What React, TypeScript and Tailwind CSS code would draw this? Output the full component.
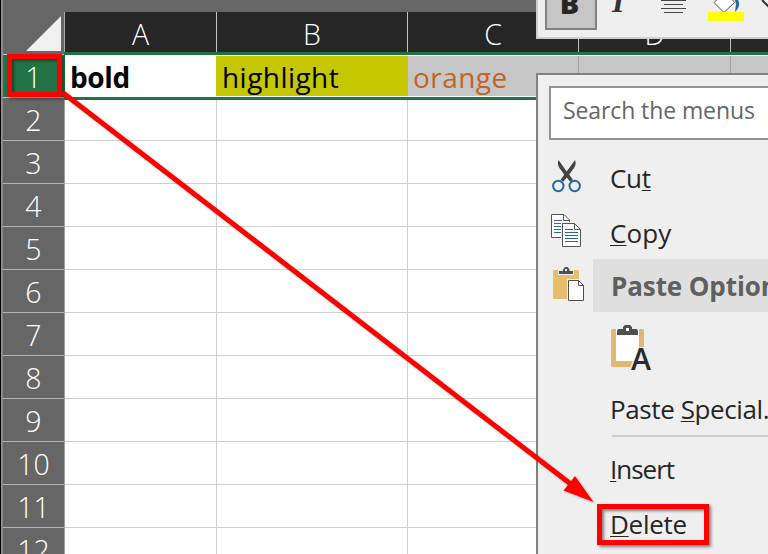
import React from "react";

const rows = [2, 3, 4, 5, 6, 7, 8, 9, 10, 11, 12];
const grid = "grid shrink-0 grid-cols-[152px_191px_171px_152px_60px]";
const u = "underline decoration-1 underline-offset-[2px] [text-decoration-skip-ink:none]";

function Sheet() {
  return (
    <div className="flex h-full w-full flex-col">
      <div className="h-3 shrink-0 bg-[#666666]" />
      <div className="flex h-10 shrink-0">
        <div className="flex w-[61px] shrink-0 justify-end bg-[#666666] pr-[3px] pt-1">
          <svg width="35" height="36" viewBox="0 0 35 36">
            <path d="M0 35 L35 0 V35Z" fill="#f0f0f0" />
          </svg>
        </div>
        <div className={`${grid} border-l border-[#a8a8a8] bg-[#262626] text-center text-[28.5px] font-[350] leading-[45px] text-white`}>
          <div className="h-10 border-r border-[#c0c0c0]">A</div>
          <div className="h-10 border-r border-[#c0c0c0]">B</div>
          <div className="h-10 border-r border-[#c0c0c0]">C</div>
          <div className="h-10 border-r border-[#c0c0c0]">D</div>
          <div />
        </div>
      </div>
      <div className="flex h-12 shrink-0">
        <div className="flex w-[61px] shrink-0 flex-col bg-[#666666] pt-0.5">
          <div className="h-[44px] border-y border-[#c6c6c6] bg-[#217346] text-center text-[28.5px] font-[350] leading-[45px] text-white">1</div>
        </div>
        <div className="shrink-0 border-y-[3px] border-l border-[#217346]">
          <div className={`${grid} h-[42px] grid-rows-[40px] border-y border-white text-[28px] leading-[43px]`}>
            <div className="bg-white pl-[5px] font-bold tracking-[-0.4px] text-black">bold</div>
            <div className="-ml-px bg-[#c4c600] pl-[6px] tracking-[0.45px] text-black">highlight</div>
            <div className="border-r border-[#a0a0a0] bg-[#c6c6c6] pl-[5px] tracking-[0.45px] text-[#bf6526]">orange</div>
            <div className="border-r border-[#a0a0a0] bg-[#c6c6c6]" />
            <div className="bg-[#c6c6c6]" />
          </div>
        </div>
      </div>
      <div className="-mt-[2px] flex flex-col">
        {rows.map((n, i) => (
          <div key={n} className="flex h-[43px] shrink-0">
            <div className="w-[61px] shrink-0 border-b border-[#b4b4b4] bg-[#666666] text-center text-[28.5px] font-[350] leading-[44px] text-white">{n}</div>
            <div className={`${grid} border-l border-l-[#a0a0a0] ${i === 0 ? "mt-[2px]" : ""}`}>
              {[0, 1, 2, 3, 4].map((c) => (
                <div key={c} className="border-b border-r border-[#d0d0d0]" />
              ))}
            </div>
          </div>
        ))}
      </div>
    </div>
  );
}

function MiniToolbar() {
  return (
    <div className="absolute left-[536px] top-0 flex h-[39px] w-[240px] overflow-hidden border-b-2 border-l-2 border-[#cdcfce] bg-[#efefef]">
      <div className="ml-[7px] flex h-[30px] w-[52px] shrink-0 items-end justify-center border-x-2 border-b-2 border-[#808080] bg-[#c6c6c6] pr-[3px]">
        <span className="mb-[11px] text-[29px] font-extrabold leading-[28px] text-[#262626]">B</span>
      </div>
      <svg width="171" height="37" viewBox="597 0 171 37" className="shrink-0">
        <text x="612" y="12" fontFamily="Liberation Serif, serif" fontWeight="700" fontStyle="italic" fontSize="32" fill="#333">I</text>
        <g stroke="#444" strokeWidth="1" shapeRendering="crispEdges">
          <path d="M661 .5H686M664 4.5H683M661 8.5H686M664 12.5H683" />
        </g>
        <path d="M714 2.5 L726 -9 L734.5 2.5 L724 12.5Z" fill="#fff" stroke="#555" />
        <path d="M733.500 -5 Q744 3 735 12 L736 4Z" fill="#2b65a5" />
        <path d="M708 12H744V21H708Z" fill="#ffff00" />
        <path d="M762 0 L768 6 L774 0" fill="none" stroke="#333" strokeWidth="2" />
      </svg>
    </div>
  );
}

function CutIcon() {
  return (
    <svg width="30" height="34" viewBox="0 0 30 34">
      <path d="M6.500 0 Q4.500 5 9 10 L12.2 14.500 L8.5 20 L11.500 21.5 L14.8 17.5 L18 21.5 L21 20 L17.2 14.500 L20.5 10 Q25 5 23 0 L14.7 11.5Z" fill="#444" />
      <g fill="none" stroke="#2b65a5" strokeWidth="2"><circle cx="6.3" cy="26" r="5.2" /><circle cx="22.7" cy="26" r="5.2" /></g>
    </svg>
  );
}

function CopyIcon() {
  return (
    <svg width="31" height="34" viewBox="0 0 31 34">
      <path d="M.5 .5H13L18.5 6V23.5H.5Z" fill="#fff" stroke="#555" />
      <path d="M12.5 .5V6.5H18.5" fill="none" stroke="#555" />
      <path d="M3 6.5H11M3 9.5H15M3 12.5H12M3 15.5H12M3 18.5H12" stroke="#2b65a5" />
      <path d="M10.5 8.5H23L30.5 15V33.5H10.5Z" fill="#efefef" stroke="#efefef" />
      <path d="M11.5 9.5H23.5L29.5 15.5V32.5H11.5Z" fill="#fff" stroke="#555" />
      <path d="M23.5 9.5V15.5H29.5" fill="none" stroke="#555" />
      <path d="M14 15.5H22M14 18.5H27M14 21.5H27M14 24.5H27M14 27.5H27" stroke="#2b65a5" />
    </svg>
  );
}

function PasteIcon() {
  return (
    <svg width="32" height="35" viewBox="0 0 32 35">
      <rect y="3" width="26" height="29" rx="1" fill="#e6be6e" />
      <path d="M5 3H21V8H5Z" fill="#efefef" />
      <path d="M6 7V4H10V2.5L12 0H14.5L16.5 2.5V4H20V7Z" fill="#505050" />
      <rect x="12" y="2" width="2" height="2" fill="#efefef" />
      <path d="M14 12H27L32 17V35H14Z" fill="#efefef" />
      <path d="M15.5 13.5H25.5L30.5 18.5V33.5H15.5Z" fill="#fff" stroke="#505050" />
      <path d="M25.5 13.5V18.5H30.5" fill="none" stroke="#505050" />
    </svg>
  );
}

function PasteValuesIcon() {
  return (
    <svg width="42" height="48" viewBox="0 0 42 48">
      <rect y="4" width="33" height="38" rx="1.5" fill="#e1b773" />
      <path d="M5 4H28V36H5Z" fill="#fff" />
      <path d="M6 10V6Q6 4 8 4H12V2L14 0H19L21 2V4H25Q27 4 27 6V10Z" fill="#505050" />
      <rect x="15" y="3" width="3" height="3" fill="#fff" />
      <path d="M26 22H34V44H19Z" fill="#efefef" />
      <path d="M26 22H28V36H21Z" fill="#fff" />
      <text x="20" y="45" fontFamily="Open Sans, sans-serif" fontWeight="600" fontSize="30" textLength="20" lengthAdjust="spacingAndGlyphs" fill="#2b2b2b">A</text>
    </svg>
  );
}

function ContextMenu() {
  return (
    <div className="absolute left-[536px] top-[73px] h-[490px] w-[300px] border-l-2 border-t-2 border-[#808080] bg-[#efefef] text-[26px] text-[#262626]">
      <div className="ml-[11px] mt-[11px] h-[54px] border-2 border-[#939393] bg-white pl-3 text-[23px] leading-[45px] tracking-[-0.1px] text-[#666]">Search the menus</div>
      <div className="flex h-[56px] pl-[14px] pt-[20px]">
        <div className="w-[58px]"><CutIcon /></div>
        <span className="leading-[37px] tracking-[-0.3px]">Cu<span className={u}>t</span></span>
      </div>
      <div className="flex h-[63px] pl-[13px] pt-[18px]">
        <div className="w-[59px]"><CopyIcon /></div>
        <span className="leading-[38px] tracking-[0.1px]"><span className={u}>C</span>opy</span>
      </div>
      <div className="flex h-[53px]">
        <div className="w-[55px] shrink-0 pl-[15px] pt-[8px]"><PasteIcon /></div>
        <div className="flex-1 whitespace-nowrap bg-[#dfdfdf] pl-[18px] font-bold leading-[54px] tracking-[-0.1px] text-[#606060]">Paste Options:</div>
      </div>
      <div className="h-[70px] pl-[73px] pt-[13px]"><PasteValuesIcon /></div>
      <div className="h-[53px] whitespace-nowrap pl-[72px] leading-[54px] tracking-[-0.4px]">Paste <span className={u}>S</span>pecial...</div>
      <div className="ml-[74px] h-[2px] bg-[#cccccc]" />
      <div className="pl-[72px] pt-[8px] leading-[48px] tracking-[-1px]"><span className={u}>I</span>nsert</div>
      <div className="pl-[72px] pt-[7px] leading-[48px] tracking-[-0.3px]"><span className={u}>D</span>elete</div>
    </div>
  );
}

export default function App() {
  return (
    <div className="relative h-[554px] w-[768px] overflow-hidden border-l border-black bg-white font-['Open_Sans',sans-serif]">
      <div className="h-full border-l-2 border-[#8d8a89]"><Sheet /></div>
      <div className="absolute -left-px top-0 h-[554px] w-[768px]">
        <MiniToolbar />
        <ContextMenu />
        <div className="absolute left-[7px] top-[54px] h-[43px] w-[55px] border-[5px] border-[#ff0000] shadow-[2px_2px_3px_#0006,inset_2px_2px_3px_#0006]" />
        <div className="absolute left-[597px] top-[504px] h-[41px] w-[112px] border-[5px] border-[#ff0000] shadow-[2px_2px_3px_#0007,inset_2px_2px_3px_#0007]" />
        <svg className="absolute left-0 top-0 drop-shadow-[1px_1px_1px_#0004]" width="768" height="554" viewBox="0 0 768 554">
          <path d="M62.500 92.500L572 485" stroke="#ff0000" strokeWidth="5" />
          <path d="M593.500 502L575 476L563.500 490.500Z" fill="#ff0000" />
        </svg>
      </div>
    </div>
  );
}
